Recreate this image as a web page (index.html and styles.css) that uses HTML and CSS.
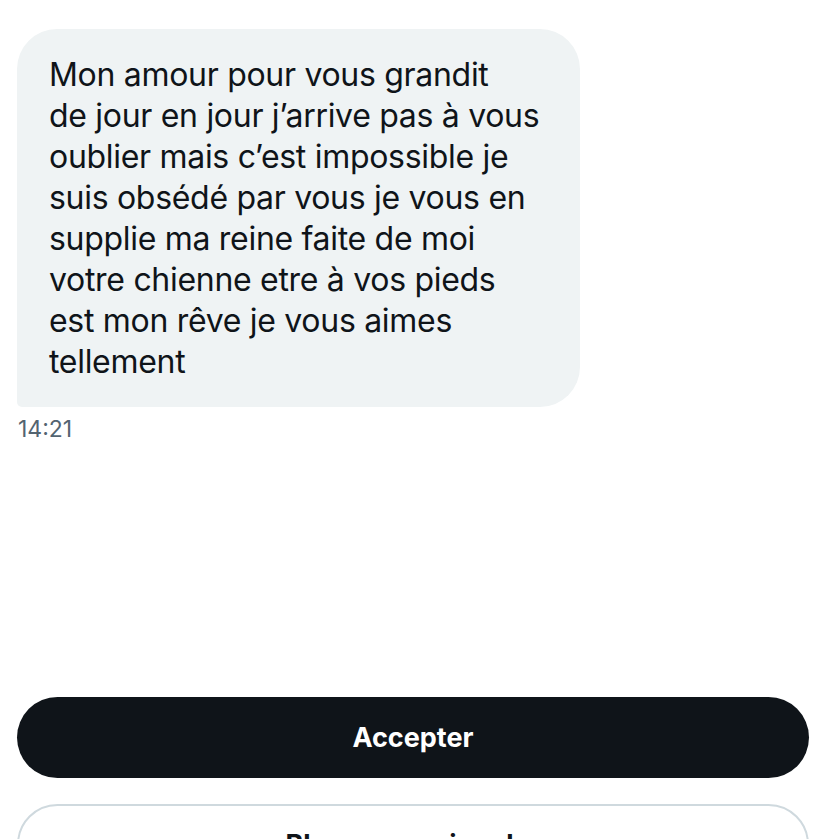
FILE: index.html
```html
<!DOCTYPE html>
<html lang="fr">
<head>
    <meta charset="UTF-8">
    <meta name="viewport" content="width=device-width, initial-scale=1.0">
    <title>Messages</title>
    <link rel="stylesheet" href="styles.css">
</head>
<body>
    <main class="conversation">
        <div class="message">
            <p class="bubble">Mon amour pour vous grandit<br>de jour en jour j’arrive pas à vous<br>oublier mais c’est impossible je<br>suis obsédé par vous je vous en<br>supplie ma reine faite de moi<br>votre chienne etre à vos pieds<br>est mon rêve je vous aimes<br>tellement</p>
            <span class="time">14:21</span>
        </div>
    </main>

    <footer class="actions">
        <button class="btn btn-primary">Accepter</button>
        <button class="btn btn-outline">Bloquer ou signaler</button>
    </footer>
</body>
</html>
```

FILE: styles.css
```css
body {
    margin: 0;
    padding: 0;
    background: #fff;
    font-family: 'Inter', 'Noto Sans', sans-serif;
    color: #0f1419;
    height: 839px;
    overflow: hidden;
}

.conversation {
    padding: 29px 17px 0;
    height: 668px;
}

.message {
    display: flex;
    flex-direction: column;
    align-items: flex-start;
}

.bubble {
    margin: 0;
    width: 563px;
    box-sizing: border-box;
    padding: 25px 20px 25px 32px;
    background: #eff3f4;
    border-radius: 40px 40px 40px 5px;
    font-size: 32px;
    line-height: 41px;
    letter-spacing: -0.3px;
}

.time {
    margin-top: 8px;
    margin-left: 1px;
    font-size: 23px;
    color: #536471;
}

.actions {
    display: flex;
    flex-direction: column;
    gap: 26px;
    padding: 0 18px 0 17px;
}

.btn {
    height: 81px;
    border-radius: 41px;
    font-family: inherit;
    font-size: 27px;
    font-weight: bold;
    cursor: pointer;
}

.btn-primary {
    background: #0f1419;
    color: #fff;
    border: none;
}

.btn-outline {
    background: #fff;
    color: #0f1419;
    border: 2px solid #cfd9de;
}
```
